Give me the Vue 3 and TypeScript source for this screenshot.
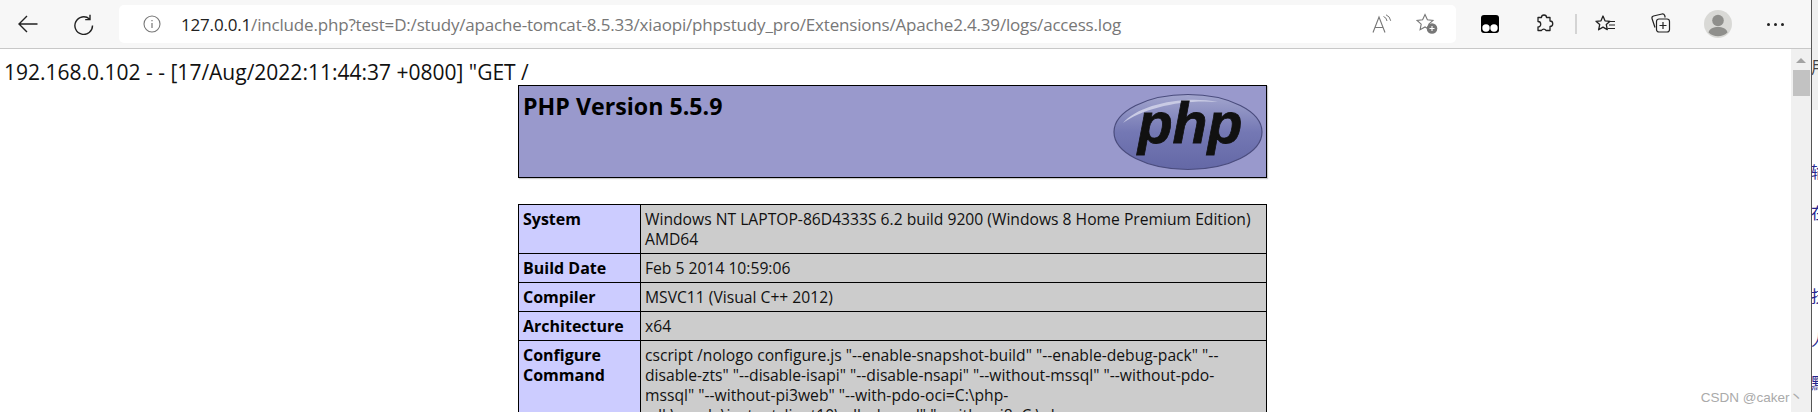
<script setup lang="ts">
interface Row { label: string; value: string }
interface Peek { char: string; top: number; dark?: boolean }

const rows: Row[] = [
  { label: 'System', value: 'Windows NT LAPTOP-86D4333S 6.2 build 9200 (Windows 8 Home Premium Edition) AMD64' },
  { label: 'Build Date', value: 'Feb 5 2014 10:59:06' },
  { label: 'Compiler', value: 'MSVC11 (Visual C++ 2012)' },
  { label: 'Architecture', value: 'x64' },
  { label: 'Configure Command', value: 'cscript /nologo configure.js "--enable-snapshot-build" "--enable-debug-pack" "--disable-zts" "--disable-isapi" "--disable-nsapi" "--without-mssql" "--without-pdo-mssql" "--without-pi3web" "--with-pdo-oci=C:\\php-sdk\\oracle\\instantclient10\\sdk,shared" "--with-oci8=C:\\php-sdk\\oracle\\instantclient10\\sdk,shared"' },
]

// edge of the window behind, only the left of each character shows
const peeks: Peek[] = [
  { char: '用', top: 54, dark: true },
  { char: '输', top: 159 },
  { char: '在', top: 200 },
  { char: '技', top: 283 },
  { char: '人', top: 327 },
  { char: '默', top: 370 },
]
</script>

<template>
  <div class="screen">
    <div class="browser">
      <header class="toolbar">
        <svg class="ico back" width="21" height="20" viewBox="0 0 21 20"><path d="M20.500 10H2M10 2L2 10l8 8" fill="none" stroke="#222" stroke-width="1.400" /></svg>
        <svg class="ico reload" width="21" height="21" viewBox="0 0 21 21"><path d="M16.500 5A8.800 8.800 0 1 0 19.500 11.500M17 .8v4.800h-4.800" fill="none" stroke="#222" stroke-width="1.400" /></svg>
        <div class="address">
          <svg class="info" width="18" height="18" viewBox="0 0 18 18"><circle cx="9" cy="9" r="8" fill="none" stroke="#777" stroke-width="1.100" /><path d="M9 8v5M9 5v1.300" stroke="#777" stroke-width="1.200" /></svg>
          <span class="url"><b>127.0.0.1</b>/include.php?test=D:/study/apache-tomcat-8.5.33/xiaopi/phpstudy_pro/Extensions/Apache2.4.39/logs/access.log</span>
          <svg class="read" width="20" height="20" viewBox="0 0 20 20"><path d="M1 18.500L7 3l6 15.500M3 13.500h8" fill="none" stroke="#777" stroke-width="1.100" /><path d="M11.500 2.500q3 1 3.500 4.500M14 .8q4 1.500 4.700 6" fill="none" stroke="#777" stroke-width="1" /></svg>
          <svg class="fav" width="22" height="22" viewBox="0 0 22 22"><path d="M9 1.500l2.400 5.300 5.600.6-4.200 3.800 1.100 5.600-4.900-2.800-4.900 2.800 1.100-5.600L1 7.400l5.600-.6z" fill="#fff" stroke="#777" stroke-width="1.100" /><circle cx="16" cy="15.500" r="5.300" fill="#777" /><path d="M13.500 15.500h5M16 13v5" stroke="#fff" stroke-width="1.100" /></svg>
        </div>
        <div class="actions">
          <svg class="tampermonkey" width="20" height="20" viewBox="0 0 20 20"><rect x="1" y="1" width="18" height="18" rx="3" fill="#000" /><circle cx="6" cy="14" r="3.700" fill="#fff" /><circle cx="14" cy="14" r="3.700" fill="#fff" /></svg>
          <svg class="puzzle" width="20" height="20" viewBox="0 0 20 20"><path d="M7.500 3.500a2.500 2.500 0 0 1 5 0h3.500v3.500a2.500 2.500 0 0 1 0 5.500v4h-4a2.500 2.500 0 0 0-4.500 0h-3.500v-3.500a2.500 2.500 0 0 0 0-5.500v-4z" fill="none" stroke="#222" stroke-width="1.300" stroke-linejoin="round" /></svg>
          <i class="sep"></i>
          <svg class="favs" width="22" height="20" viewBox="0 0 22 20"><path d="M8 2l2 4.800 5 .5-3.700 3.300 1 5-4.300-2.500-4.400 2.700 1.100-5.200-3.700-3.300 5-.5z" fill="none" stroke="#222" stroke-width="1.300" stroke-linejoin="round" /><path d="M13 7.500h7M14 11h6M13 14.500h7" stroke="#222" stroke-width="1.100" /></svg>
          <svg class="coll" width="22" height="22" viewBox="0 0 22 22"><path d="M5 14.500L2 5.500q-.4-2 1.500-2.500L12 1q2-.3 2.700 1.500l.5 2" fill="none" stroke="#222" stroke-width="1.200" /><rect x="6.500" y="6" width="13" height="13" rx="2.500" fill="#f7f7f7" stroke="#222" stroke-width="1.200" /><path d="M13 9v7M9.500 12.500h7" stroke="#222" stroke-width="1.200" /></svg>
          <svg class="avatar" width="28" height="28" viewBox="0 0 28 28"><circle cx="14" cy="14" r="14" fill="#d9d9d6" /><circle cx="14" cy="10.500" r="5.800" fill="#8f8f8c" /><path d="M4.500 22.500c1-4 5-5.500 9.500-5.500s8.500 1.500 9.500 5.500a14 14 0 0 1-19 0z" fill="#8f8f8c" /></svg>
          <span class="more"><i></i><i></i><i></i></span>
        </div>
      </header>

      <div class="viewport">
        <main class="page">
          <p class="log">192.168.0.102 - - [17/Aug/2022:11:44:37 +0800] "GET /</p>
          <div class="banner">
            <h1>PHP Version 5.5.9</h1>
            <svg class="logo" width="150" height="78" viewBox="0 0 150 78">
              <defs>
                <linearGradient id="oval" x1="0" y1="0" x2="0" y2="1">
                  <stop offset="0" stop-color="#a3a6ce" />
                  <stop offset="0.500" stop-color="#7478b4" />
                  <stop offset="1" stop-color="#6468a6" />
                </linearGradient>
              </defs>
              <ellipse cx="75" cy="39" rx="74" ry="37.500" fill="url(#oval)" stroke="#4a4c7d" stroke-width="1.200" />
              <path d="M10 30C25 12 70 2 105 9 70 6 30 15 10 30z" fill="#c9cbe4" />
              <text x="77" y="50" text-anchor="middle" class="logo-text">php</text>
            </svg>
          </div>
          <table class="info-table">
            <tbody>
              <tr v-for="row in rows" :key="row.label">
                <td class="key">{{ row.label }}</td>
                <td class="val">{{ row.value }}</td>
              </tr>
            </tbody>
          </table>
        </main>
        <aside class="scrollbar">
          <span class="arrow"></span>
          <span class="thumb"></span>
        </aside>
        <span class="watermark">CSDN @caker丶</span>
      </div>
    </div>
    <div class="behind">
      <div class="behind-top"></div>
      <span v-for="p in peeks" :key="p.char" :class="{ dark: p.dark }" :style="{ top: p.top + 'px' }">{{ p.char }}</span>
    </div>
  </div>
</template>

<style>
html, body { margin: 0; overflow: hidden; background: #fff; }
</style>

<style scoped>
.screen { width: 1818px; height: 412px; display: flex; overflow: hidden; font-family: "Open Sans", "Noto Sans", sans-serif; }
.browser { width: 1811px; flex: none; display: flex; flex-direction: column; }
.toolbar { height: 49px; box-sizing: border-box; flex: none; display: flex; align-items: center; background: #f7f7f7; border-bottom: 1px solid #c8c8c8; }
.back { margin-left: 17px; }
.reload { margin-left: 35px; }
.address { margin-left: 25px; width: 1337px; height: 38px; background: #fff; border-radius: 5px; display: flex; align-items: center; }
.info { margin-left: 24px; }
.url { margin-left: 20px; font-size: 17px; color: #777; white-space: nowrap; flex: 1; letter-spacing: -0.18px; }
.url b { font-weight: 400; color: #222; }
.read { margin-right: 24px; }
.fav { margin-right: 18px; }
.actions { flex: 1; display: flex; align-items: center; }
.tampermonkey { margin-left: 24px; }
.puzzle { margin-left: 34px; }
.sep { width: 2px; height: 20px; background: #d4d4d4; margin-left: 21px; }
.favs { margin-left: 18px; }
.coll { margin-left: 33px; }
.avatar { margin-left: 32px; }
.more { margin-left: 35px; display: flex; gap: 4px; }
.more i { width: 3px; height: 3px; border-radius: 50%; background: #222; }

.viewport { flex: 1; min-height: 0; display: flex; position: relative; overflow: hidden; }
.page { flex: 1; min-width: 0; color: #000; }
.log { margin: 0; padding: 10px 0 0 4px; font-size: 21px; line-height: 26px; height: 26px; white-space: nowrap; color: #111; }
.banner { width: 749px; height: 93px; margin: 0 0 0 518px; box-sizing: border-box; border: 1px solid #000; background: #9999cc; display: flex; justify-content: space-between; box-shadow: 1px 1px 1px #ccc; }
h1 { margin: 0; padding: 5px 4px; font-size: 23.200px; line-height: 30px; font-weight: 700; color: #000; }
.logo { margin: 7px 3px 0 0; }
.logo-text { font-family: "Liberation Sans", sans-serif; font-size: 57px; font-weight: 700; font-style: italic; fill: #111; stroke: #111; stroke-width: 0.800px; }
.info-table { width: 749px; margin: 26px 0 0 518px; border-collapse: collapse; font-size: 15.660px; line-height: 20px; }
.info-table td { border: 1px solid #000; padding: 4px 3px 4px 4px; vertical-align: top; }
.key { width: 114px; background: #ccccff; font-weight: 700; font-size: 16px; }
.info-table td.val { background: #cccccc; color: #111; padding-right: 8px; }

.scrollbar { width: 20px; flex: none; background: #f0f0f0; display: flex; flex-direction: column; align-items: center; }
.arrow { margin-top: 9px; border: 5px solid transparent; border-top: 0; border-bottom: 5px solid #a3a3a3; }
.thumb { width: 17px; height: 26px; margin-top: 7px; background: #c2c2c2; }
.watermark { position: absolute; right: 8px; bottom: 6px; font-family: "Liberation Sans", "Noto Sans CJK SC", sans-serif; font-size: 13.500px; color: #aaa; }

.behind { width: 7px; flex: none; position: relative; overflow: hidden; background: #fff; border-left: 1px solid #555; box-sizing: border-box; }
.behind-top { height: 110px; background: #efefef; }
.behind span { position: absolute; left: -1px; font-family: "Noto Sans CJK SC", sans-serif; font-size: 16px; color: #23238e; }
.behind .dark { color: #444; }
</style>
